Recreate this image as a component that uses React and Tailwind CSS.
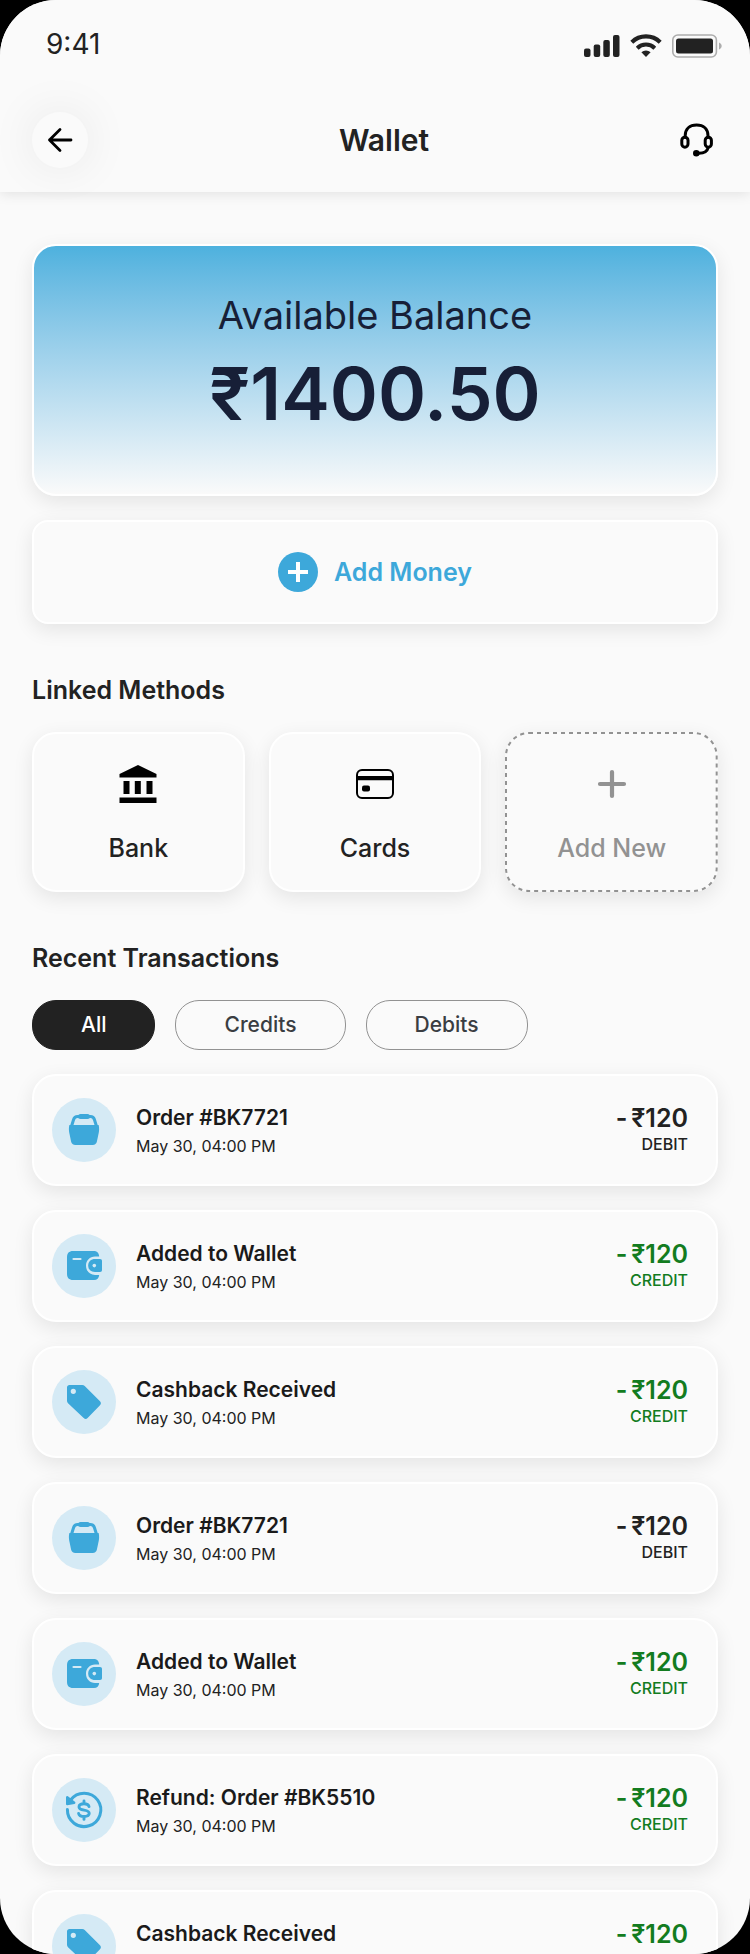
import { useState } from "react";

const CARD = "border-2 border-white bg-[#fafafa] shadow-[0_6px_20px_rgba(0,0,0,0.09)]";

const SignalIcon = () => (
  <svg width="36" height="24" viewBox="0 0 36 24" fill="#222" aria-hidden="true">
    <rect x="0" y="14.5" width="6.5" height="8.5" rx="2" />
    <rect x="9.7" y="10.5" width="6.5" height="12.5" rx="2" />
    <rect x="19.3" y="6" width="6.5" height="17" rx="2" />
    <rect x="29" y="1" width="6.5" height="22" rx="2" />
  </svg>
);

const WifiIcon = () => (
  <svg width="32" height="24" viewBox="0 0 32 24" fill="none" aria-hidden="true">
    <path d="M1.8 8.2a20.4 20.4 0 0 1 28.4 0" stroke="#222" strokeWidth="4.2" />
    <path d="M7.2 14.2a12.6 12.6 0 0 1 17.6 0" stroke="#222" strokeWidth="4" />
    <path d="M11.4 18.2a6.8 6.8 0 0 1 9.2 0L16 23z" fill="#222" />
  </svg>
);

const BatteryIcon = () => (
  <svg width="50" height="24" viewBox="0 0 50 24" fill="none" aria-hidden="true">
    <rect x="0.8" y="1" width="43.6" height="22" rx="5" stroke="#adadad" strokeWidth="1.6" />
    <rect x="4" y="4.5" width="37" height="15" rx="2.5" fill="#222" />
    <path d="M47 8.5c3.6 1.6 3.6 5.4 0 7z" fill="#adadad" />
  </svg>
);

const BackIcon = () => (
  <svg width="26" height="26" viewBox="0 0 26 26" fill="none" stroke="#000" strokeWidth="2.8" strokeLinecap="round" strokeLinejoin="round" aria-hidden="true">
    <path d="M24 13H2.5M13 2.5 2.5 13 13 23.5" />
  </svg>
);

const HeadsetIcon = () => (
  <svg width="34" height="34" viewBox="0 0 34 34" fill="none" stroke="#000" strokeWidth="3" strokeLinecap="round" aria-hidden="true">
    <rect x="1.8" y="14.2" width="6.2" height="10" rx="3.1" />
    <rect x="25.2" y="14.2" width="6.2" height="10" rx="3.1" />
    <path d="M5.2 14v-1.2C5.2 6 9.8 1.9 16.6 1.9S28 6 28 12.8V14" />
    <path d="M28.2 24.5c-.8 3.6-4.4 5.8-9.2 5.8" />
    <circle cx="16.3" cy="30.3" r="1.8" fill="#000" />
  </svg>
);

const BankIcon = () => (
  <svg width="38" height="40" viewBox="0 0 38 40" fill="#000" aria-hidden="true">
    <path d="M.5 10 19 1l18.5 9v3.5H.5zM4.5 17h6v13h-6zM15.8 17h6v13h-6zM27.5 17h6v13h-6zM.5 33.5h37V39H.5z" />
  </svg>
);

const CardIcon = () => (
  <svg width="38" height="40" viewBox="0 0 38 40" fill="none" aria-hidden="true">
    <rect x="1" y="6" width="36" height="28" rx="5" stroke="#000" strokeWidth="2" />
    <path d="M1 14.2h36" stroke="#000" strokeWidth="4.2" />
    <rect x="6" y="21.5" width="8" height="6" rx="2" fill="#000" />
  </svg>
);

const PlusIcon = () => (
  <svg width="40" height="40" viewBox="0 0 40 40" fill="none" stroke="currentColor" strokeWidth="4.2" strokeLinecap="round" aria-hidden="true">
    <path d="M20 8v24M8 20h24" />
  </svg>
);

const AddCircleIcon = () => (
  <svg width="40" height="40" viewBox="0 0 40 40" aria-hidden="true">
    <circle cx="20" cy="20" r="20" fill="#3da8da" />
    <path d="M20 10v20M10 20h20" stroke="#fff" strokeWidth="4" />
  </svg>
);

const BasketIcon = () => (
  <>
    <path d="M17.4 27h29.2c.7 2.8.6 5.4.1 8l-1.8 8.5c-.5 2.3-1.9 3.5-4.2 3.5H23.3c-2.3 0-3.7-1.2-4.2-3.5L17.3 35c-.5-2.6-.6-5.2.1-8z" fill="#3da8da" />
    <path d="M19.6 28l2-6.5c.6-2 1.9-3 4-3h12.8c2.1 0 3.4 1 4 3l2 6.5" fill="none" stroke="#3da8da" strokeWidth="3" />
    <rect x="26" y="16" width="12" height="5" rx="2.5" fill="#3da8da" />
  </>
);

const WalletIcon = () => (
  <>
    <path d="M21 17h21c3 0 5 2.2 5.2 5.5H43c-5.2 0-9 4-9 9.2s3.8 9.2 9 9.2h4.2C47 44 45 46 42 46H21c-4 0-6-2.2-6-6V23c0-3.8 2-6 6-6z" fill="#3da8da" />
    <path d="M43 25h5c1.3 0 2 .8 2 2v9c0 1.3-.7 2-2 2h-5c-4 0-6.8-2.6-6.8-6.5S39 25 43 25z" fill="#3da8da" />
    <circle cx="42.3" cy="31.6" r="1.8" fill="#d5eaf5" />
    <path d="M21.5 25h7" stroke="#d5eaf5" strokeWidth="2.2" strokeLinecap="round" />
  </>
);

const TagIcon = () => (
  <path
    fillRule="evenodd"
    d="M17.5 15h12.8c1 0 1.7.3 2.4 1L48 31.3c1.2 1.2 1.2 2.7 0 3.9L35.6 48c-1.2 1.2-2.7 1.2-3.9 0L16 33.2c-.7-.7-1-1.4-1-2.4V17.5c0-1.5 1-2.5 2.5-2.5zm3.8 3.7a2.6 2.6 0 1 0 0 5.2 2.6 2.6 0 0 0 0-5.2z"
    fill="#3da8da"
  />
);

const RefundIcon = () => (
  <g fill="none" stroke="#3da8da" strokeLinecap="round" strokeLinejoin="round">
    <path d="M15.4 31.5a16.7 16.7 0 1 0 3.2-9.5" strokeWidth="3" />
    <path d="M15.2 19.3v6.8l7-1.3z" strokeWidth="2.4" fill="#3da8da" />
    <path d="M37 28.5c-.4-1.9-2-2.8-5-2.8s-5 1-5 3.2c0 4.6 10.2 1.7 10.2 6.4 0 2.1-2 3.2-5.2 3.2s-5-1-5.4-3M32 23v2.5M32 38.8v2.6" strokeWidth="2.9" />
  </g>
);

const ICONS = {
  order: BasketIcon,
  wallet: WalletIcon,
  cashback: TagIcon,
  refund: RefundIcon,
};

const TRANSACTIONS = [
  { id: 1, icon: "order", title: "Order #BK7721", type: "DEBIT" },
  { id: 2, icon: "wallet", title: "Added to Wallet", type: "CREDIT" },
  { id: 3, icon: "cashback", title: "Cashback Received", type: "CREDIT" },
  { id: 4, icon: "order", title: "Order #BK7721", type: "DEBIT" },
  { id: 5, icon: "wallet", title: "Added to Wallet", type: "CREDIT" },
  { id: 6, icon: "refund", title: "Refund: Order #BK5510", type: "CREDIT" },
  { id: 7, icon: "cashback", title: "Cashback Received", type: "CREDIT" },
];

const FILTERS = [
  { label: "All", type: null },
  { label: "Credits", type: "CREDIT" },
  { label: "Debits", type: "DEBIT" },
];

const MethodCard = ({ icon, label }) => (
  <button className={`flex flex-col items-center gap-[26px] rounded-3xl pt-[30px] pb-6 ${CARD}`}>
    {icon}
    <span className="text-[25px] leading-9 font-medium text-[#222]">{label}</span>
  </button>
);

const AddMethodCard = () => (
  <button className="relative flex flex-col items-center gap-[26px] rounded-3xl bg-[#fafafa] pt-8 pb-[26px] text-[#929292] shadow-[0_6px_20px_rgba(0,0,0,0.09)]">
    {/* dashed outline, finer than border-dashed */}
    <span className="pointer-events-none absolute inset-px" aria-hidden="true">
      <svg className="size-full overflow-visible" fill="none">
        <rect width="100%" height="100%" rx="23" stroke="#929292" strokeWidth="2" strokeDasharray="4 4" />
      </svg>
    </span>
    <PlusIcon />
    <span className="text-[25px] leading-9 font-medium">Add New</span>
  </button>
);

const TransactionRow = ({ icon, title, type }) => {
  const Icon = ICONS[icon];

  return (
    <li className={`flex items-center gap-5 rounded-3xl py-[22px] pr-7 pl-[18px] ${CARD}`}>
      <svg width="64" height="64" viewBox="0 0 64 64" className="shrink-0" aria-hidden="true">
        <circle cx="32" cy="32" r="32" fill="#d5eaf5" />
        <Icon />
      </svg>

      <div className="flex-1 pt-1">
        <h3 className="text-[21px] leading-7 font-semibold text-[#1a1a1a]">{title}</h3>
        <p className="text-base leading-7 text-[#222]">May 30, 04:00 PM</p>
      </div>

      <div className={`text-right ${type === "DEBIT" ? "text-[#222]" : "text-[#137c1f]"}`}>
        <p className="flex justify-end gap-1 text-[25px] leading-7 font-semibold">
          <span>-</span>
          <span>₹120</span>
        </p>
        <p className="text-base leading-6 font-medium">{type}</p>
      </div>
    </li>
  );
};

const App = () => {
  const [filter, setFilter] = useState(FILTERS[0]);

  const rows = TRANSACTIONS.filter((t) => !filter.type || t.type === filter.type);

  return (
    <div className="h-screen bg-black font-['Inter',sans-serif]">
      <div className="flex h-full flex-col overflow-hidden rounded-[56px] bg-[#fafafa]">

        <header className="relative z-10 shrink-0 bg-[#fafafa] shadow-[0_2px_12px_rgba(0,0,0,0.1)]">
          <div className="flex h-22 items-center justify-between pr-7 pl-[46px]">
            <span className="text-[28px] leading-8 text-[#222]">9:41</span>
            <div className="flex items-center gap-2.5 pt-1">
              <SignalIcon />
              <WifiIcon />
              <BatteryIcon />
            </div>
          </div>

          <div className="flex h-26 items-center justify-between pr-9 pl-8">
            <button
              aria-label="Back"
              className="flex size-14 items-center justify-center rounded-full bg-[#fafafa] shadow-[0_0_48px_rgba(0,0,0,0.08)]"
            >
              <BackIcon />
            </button>
            <h1 className="text-[30px] leading-10 font-semibold text-[#222]">Wallet</h1>
            <button aria-label="Support">
              <HeadsetIcon />
            </button>
          </div>
        </header>

        <main className="flex-1 overflow-y-auto px-8 pt-[52px] pb-12 [scrollbar-width:none]">
          <section className="rounded-3xl border-2 border-white bg-linear-to-b from-[#4db1de] to-[#fafafa] pt-[42px] pb-12 text-center text-[#171f37] shadow-[0_6px_20px_rgba(0,0,0,0.09)]">
            <p className="text-[38px] leading-[54px]">Available Balance</p>
            <p className="text-[73px] leading-[104px] font-semibold">₹1400.50</p>
          </section>

          <button className={`mt-6 flex w-full items-center justify-center gap-4 rounded-2xl py-[30px] ${CARD}`}>
            <AddCircleIcon />
            <span className="text-[25px] leading-9 font-semibold text-[#3da8da]">Add Money</span>
          </button>

          <section className="mt-12">
            <h2 className="text-[25px] leading-9 font-semibold text-[#222]">Linked Methods</h2>
            <div className="mt-6 grid grid-cols-3 gap-6">
              <MethodCard icon={<BankIcon />} label="Bank" />
              <MethodCard icon={<CardIcon />} label="Cards" />
              <AddMethodCard />
            </div>
          </section>

          <section className="mt-12">
            <h2 className="text-[25px] leading-9 font-semibold text-[#222]">Recent Transactions</h2>

            <div className="mt-6 flex gap-5">
              {FILTERS.map((f) => (
                <button
                  key={f.label}
                  onClick={() => setFilter(f)}
                  className={`h-[50px] rounded-3xl border px-12 text-[21px] font-medium ${
                    f === filter
                      ? "border-[#222] bg-[#222] text-white"
                      : "border-[#929292] text-[#3a3d42]"
                  }`}
                >
                  {f.label}
                </button>
              ))}
            </div>

            <ul className="mt-6 flex flex-col gap-6">
              {rows.map((t) => (
                <TransactionRow key={t.id} icon={t.icon} title={t.title} type={t.type} />
              ))}
            </ul>
          </section>
        </main>

      </div>
    </div>
  );
};

export default App;
